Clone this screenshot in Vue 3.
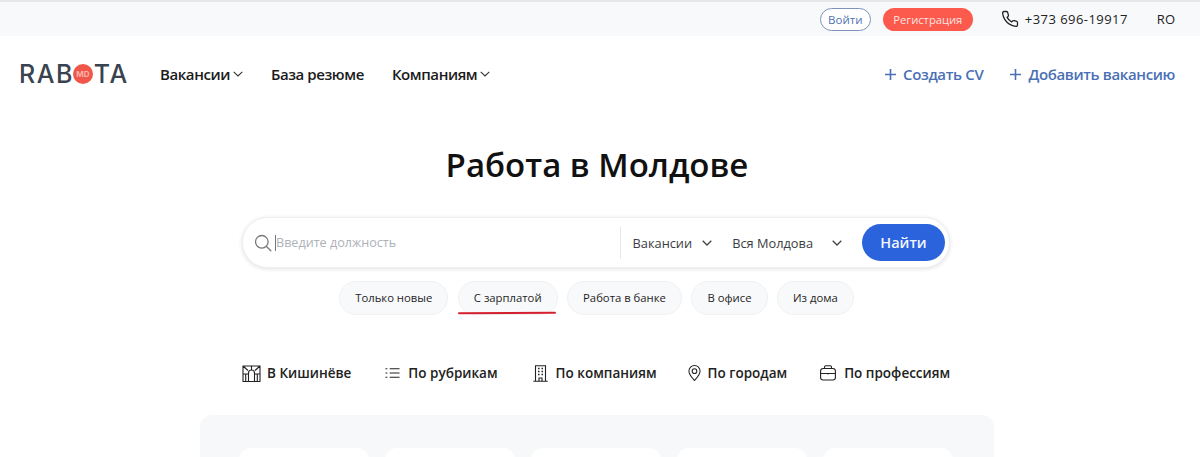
<script setup>
const chips = [
  { label: 'Только новые' },
  { label: 'С зарплатой', marked: true },
  { label: 'Работа в банке' },
  { label: 'В офисе' },
  { label: 'Из дома' },
]
const cards = [1, 2, 3, 4, 5]
</script>

<template>
  <div class="page">
    <div class="topbar">
      <a class="login">Войти</a>
      <a class="register">Регистрация</a>
      <svg class="phone" width="18" height="18" viewBox="0 0 24 24" fill="none" stroke="#222" stroke-width="1.7" stroke-linecap="round" stroke-linejoin="round">
        <path d="M22 16.920v3a2 2 0 0 1-2.180 2 19.790 19.790 0 0 1-8.630-3.070 19.500 19.500 0 0 1-6-6 19.790 19.790 0 0 1-3.070-8.670A2 2 0 0 1 4.110 2h3a2 2 0 0 1 2 1.720 12.840 12.840 0 0 0 .7 2.810 2 2 0 0 1-.45 2.110L8.090 9.910a16 16 0 0 0 6 6l1.270-1.270a2 2 0 0 1 2.110-.45 12.840 12.840 0 0 0 2.810.7A2 2 0 0 1 22 16.920z" />
      </svg>
      <span class="tel">+373 696-19917</span>
      <span class="lang">RO</span>
    </div>

    <header class="nav">
      <div class="logo">
        <span>RAB</span>
        <span class="logo-o">MD</span>
        <span>TA</span>
      </div>
      <nav class="menu">
        <a class="menu-item">Вакансии
          <svg width="10" height="6" viewBox="0 0 10 6" fill="none" stroke="#333" stroke-width="1.100"><path d="M.7.8 5 5l4.300-4.200" /></svg>
        </a>
        <a class="menu-item">База резюме</a>
        <a class="menu-item">Компаниям
          <svg width="10" height="6" viewBox="0 0 10 6" fill="none" stroke="#333" stroke-width="1.100"><path d="M.7.8 5 5l4.300-4.200" /></svg>
        </a>
      </nav>
      <div class="actions">
        <a class="action"><svg class="plus" width="11" height="11" viewBox="0 0 11 11" stroke="#4b6fb5" stroke-width="1.600"><path d="M5.500 0v11M0 5.500h11" /></svg>Создать CV</a>
        <a class="action"><svg class="plus" width="11" height="11" viewBox="0 0 11 11" stroke="#4b6fb5" stroke-width="1.600"><path d="M5.500 0v11M0 5.500h11" /></svg>Добавить вакансию</a>
      </div>
    </header>

    <h1 class="title">Работа в Молдове</h1>

    <div class="search">
      <svg class="lens" width="18" height="18" viewBox="0 0 18 18" fill="none" stroke="#777" stroke-width="1.300" stroke-linecap="round">
        <circle cx="7.800" cy="7.800" r="6.300" /><path d="m12.500 12.500 4.300 4.300" />
      </svg>
      <span class="caret"></span>
      <span class="placeholder">Введите должность</span>
      <span class="divider"></span>
      <span class="select first">Вакансии
        <svg width="10" height="6" viewBox="0 0 10 6" fill="none" stroke="#444" stroke-width="1.300"><path d="M.7.8 5 5l4.300-4.200" /></svg>
      </span>
      <span class="select second">Вся Молдова
        <svg width="10" height="6" viewBox="0 0 10 6" fill="none" stroke="#444" stroke-width="1.300"><path d="M.7.8 5 5l4.300-4.200" /></svg>
      </span>
      <button class="find">Найти</button>
    </div>

    <div class="chips">
      <span v-for="chip in chips" :key="chip.label" class="chip" :class="{ marked: chip.marked }">{{ chip.label }}</span>
    </div>

    <div class="tabs">
      <a class="tab city">
        <svg width="19" height="17" viewBox="0 0 19 17" fill="none" stroke="#222" stroke-width="1.100">
          <path d="M.5 1h18M.5 16.500h18M1 1v15.500M18 1v15.500M6.500 16.500V8c0-2 1-3 3-3s3 1 3 3v8.500M1 9h5.500M12.500 9H18M3.700 9v7.500M15.300 9v7.500M1 1l5 4.500M18 1l-5 4.500M9.500 1v4" />
        </svg>
        В Кишинёве
      </a>
      <a class="tab rubrics">
        <svg width="15" height="12" viewBox="0 0 16 12" fill="none" stroke="#222" stroke-width="1.200">
          <path d="M5 1.500h10.500M5 6h10.500M5 10.500h10.500M.5 1.500h2M.5 6h2M.5 10.500h2" />
        </svg>
        По рубрикам
      </a>
      <a class="tab companies">
        <svg width="15" height="17" viewBox="0 0 15 17" fill="none" stroke="#222" stroke-width="1.100">
          <path d="M2.500 16V.7h10V16M.3 16.300h14.400M6 16v-3h3v3" />
          <path d="M5 3.500h1.500M8.500 3.500H10M5 6.500h1.500M8.500 6.500H10M5 9.500h1.500M8.500 9.500H10" stroke-width="1.300" />
        </svg>
        По компаниям
      </a>
      <a class="tab cities">
        <svg width="13" height="18" viewBox="0 0 14 18" fill="none" stroke="#222" stroke-width="1.100">
          <path d="M7 17C4 13.500 1 10.500 1 7a6 6 0 0 1 12 0c0 3.500-3 6.500-6 10z" /><circle cx="7" cy="7" r="2.500" />
        </svg>
        По городам
      </a>
      <a class="tab professions">
        <svg width="16" height="16" viewBox="0 0 16 16" fill="none" stroke="#222" stroke-width="1.100">
          <rect x=".6" y="3.500" width="14.800" height="11.500" rx="2.500" />
          <path d="M4.500 3.500V2a1.300 1.300 0 0 1 1.300-1.300h4.400A1.300 1.300 0 0 1 11.500 2v1.500M.6 8.500h14.800M8 8v1.500" />
        </svg>
        По профессиям
      </a>
    </div>

    <section class="panel">
      <div v-for="card in cards" :key="card" class="card"></div>
    </section>
  </div>
</template>

<style>
html, body { margin: 0; background: #fff; overflow: hidden; }
</style>

<style scoped>
.page {
  height: 457px;
  overflow: hidden;
  font-family: "Open Sans", "Noto Sans", sans-serif;
  color: #161616;
  background: #fff;
}
.topbar {
  height: 34px;
  border-top: 2px solid #e6e8ec;
  background: #f8f9fb;
  display: flex;
  align-items: center;
  justify-content: flex-end;
  padding-right: 25px;
  font-size: 13px;
}
.login {
  box-sizing: border-box;
  width: 51px;
  height: 23px;
  line-height: 21px;
  text-align: center;
  border: 1px solid #7d93bd;
  border-radius: 12px;
  font-size: 11.500px;
  color: #4f74b4;
  background: #fff;
}
.register {
  width: 90px;
  height: 23px;
  line-height: 23px;
  text-align: center;
  margin-left: 12px;
  border-radius: 12px;
  font-size: 11.200px;
  color: #fde5e0;
  background: #fb5a4c;
}
.phone { margin-left: 28px; }
.tel { margin-left: 6px; letter-spacing: .45px; color: #222; }
.lang { margin-left: 29px; color: #222; }

.nav {
  height: 76px;
  display: flex;
  align-items: center;
  padding: 0 25px 0 19px;
}
.logo {
  display: flex;
  align-items: center;
  width: 109px;
  font-family: "Inter", sans-serif;
  font-size: 25px;
  font-weight: 500;
  letter-spacing: 1.500px;
  color: #39434f;
}
.logo-o {
  flex: none;
  width: 20px;
  height: 20px;
  margin-left: -1px;
  margin-right: 1px;
  border-radius: 50%;
  background: #f0574a;
  color: #f9b3a9;
  font-size: 8px;
  font-weight: 700;
  line-height: 20px;
  text-align: center;
  letter-spacing: 0;
}
.menu {
  display: flex;
  margin-left: 32px;
  gap: 28px;
}
.menu-item {
  display: flex;
  align-items: center;
  gap: 3px;
  font-size: 15px;
  font-weight: 600;
  letter-spacing: -.42px;
  color: #1b1b1b;
  white-space: nowrap;
}
.actions {
  margin-left: auto;
  display: flex;
  gap: 27px;
}
.action {
  display: flex;
  align-items: center;
  font-size: 15px;
  font-weight: 600;
  letter-spacing: -.36px;
  color: #4b6fb5;
  white-space: nowrap;
}
.plus {
  margin-right: 7px;
}

.title {
  margin: 22px 0 0;
  height: 62px;
  padding-right: 6px;
  text-align: center;
  font-size: 33px;
  line-height: 62px;
  font-weight: 600;
  color: #111;
}

.search {
  box-sizing: border-box;
  width: 708px;
  height: 51px;
  margin: 21px 0 0 242px;
  display: flex;
  align-items: center;
  border: 1px solid #eceef0;
  border-radius: 26px;
  box-shadow: 0 1px 4px rgba(40, 50, 70, .14);
  padding: 0 4px 0 11px;
  background: #fff;
}
.lens { flex: none; }
.caret {
  flex: none;
  width: 1px;
  height: 16px;
  margin-left: 3px;
  background: #6f7680;
}
.placeholder {
  width: 347px;
  font-size: 12.600px;
  color: #aeb2b8;
}
.divider {
  flex: none;
  width: 1px;
  height: 32px;
  background: #e6e7ea;
}
.select {
  display: flex;
  align-items: center;
  font-size: 12.800px;
  color: #3a3d42;
  white-space: nowrap;
}
.first { gap: 10px; margin-left: 12px; }
.second { gap: 19px; margin-left: 20px; }
.find {
  flex: none;
  width: 83px;
  height: 37px;
  margin-left: 20px;
  border: 0;
  border-radius: 19px;
  background: #2a63dc;
  color: #f3f6fd;
  font: 600 14.500px "Open Sans", sans-serif;
}

.chips {
  display: flex;
  justify-content: center;
  gap: 9.500px;
  margin-top: 13px;
  padding-right: 7px;
}
.chip {
  position: relative;
  box-sizing: border-box;
  height: 34px;
  padding: 0 15px;
  line-height: 32px;
  border: 1px solid #eff1f3;
  border-radius: 17px;
  background: #f8f9fb;
  font-size: 11.300px;
  color: #1f1f1f;
  white-space: nowrap;
}
.chip.marked::after {
  content: "";
  position: absolute;
  left: -1px;
  right: 1px;
  top: 29.500px;
  height: 2px;
  border-radius: 1px;
  background: #d5202e;
  transform: rotate(-.3deg);
}

.tabs {
  display: flex;
  margin-top: 48px;
  height: 20px;
  padding-left: 242px;
}
.tab {
  display: flex;
  align-items: center;
  font-size: 13.500px;
  font-weight: 600;
  color: #222;
  white-space: nowrap;
}
.city { gap: 6px; }
.rubrics { gap: 8px; margin-left: 34px; }
.companies { gap: 8px; margin-left: 35px; }
.cities { gap: 7px; margin-left: 31px; }
.professions { gap: 8px; margin-left: 33px; }

.panel {
  box-sizing: border-box;
  width: 794px;
  height: 120px;
  margin: 32px 0 0 200px;
  padding: 33px 39px 0;
  display: flex;
  gap: 16px;
  border-radius: 12px;
  background: #f7f8fa;
}
.card {
  flex: none;
  width: 130px;
  height: 80px;
  border-radius: 12px;
  background: #fff;
}
</style>
